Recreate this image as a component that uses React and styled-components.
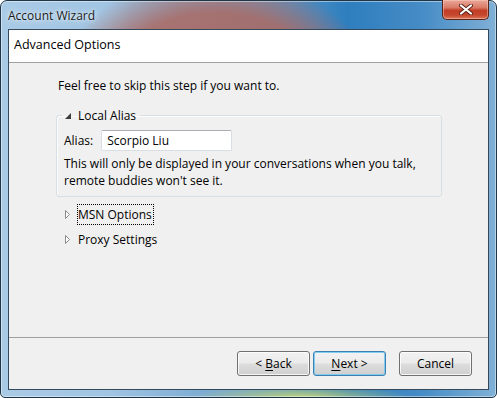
import React from "react";
import styled, { createGlobalStyle } from "styled-components";

const GlobalStyle = createGlobalStyle`
  html, body {
    margin: 0;
    padding: 0;
    background: #ffffff;
  }
  body {
    width: 497px;
    height: 398px;
    overflow: hidden;
    font-family: "Open Sans", "Noto Sans", sans-serif;
    font-size: 12px;
    color: #000;
  }
`;

const Window = styled.div`
  width: 497px;
  height: 398px;
  box-sizing: border-box;
  border: 1px solid #1f3548;
  border-radius: 7px 7px 5px 5px;
  padding: 0 7px 7px 7px;
  display: flex;
  flex-direction: column;
  box-shadow: inset 0 0 0 1px rgba(255, 255, 255, 0.45);
  background:
    radial-gradient(circle 190px at 215px 160px, rgba(168, 102, 96, 0.9) 0%, rgba(172, 104, 96, 0.85) 78%, rgba(172, 104, 96, 0) 100%),
    radial-gradient(ellipse 110px 14px at 300px 397px, rgba(196, 214, 120, 1), rgba(196, 214, 120, 0) 100%),
    linear-gradient(90deg, rgba(170, 203, 230, 1) 0%, rgba(160, 196, 226, 1) 22%, rgba(108, 160, 205, 1) 50%, rgba(46, 126, 190, 1) 70%, rgba(70, 140, 198, 1) 85%, rgba(128, 176, 214, 1) 100%);
`;

const TitleBar = styled.div`
  height: 28px;
  display: flex;
  justify-content: space-between;
  align-items: flex-start;
  flex: none;
`;

const Title = styled.span`
  margin-top: 6px;
  line-height: 17px;
  color: #1a1a1a;
  text-shadow: 0 0 6px rgba(255, 255, 255, 0.9), 0 0 3px rgba(255, 255, 255, 0.7);
`;

const CloseButton = styled.div`
  width: 47px;
  height: 20px;
  margin-top: -1px;
  box-sizing: border-box;
  border: 1px solid #5a2418;
  border-top: none;
  border-radius: 0 0 5px 5px;
  display: flex;
  align-items: center;
  justify-content: center;
  background: linear-gradient(180deg, #e9a89a 0%, #d97a66 40%, #c23e26 55%, #c5482e 80%, #dd7a5c 100%);
  box-shadow: inset 0 0 0 1px rgba(255, 210, 200, 0.45);
`;

const Client = styled.div`
  flex: 1;
  display: flex;
  flex-direction: column;
  border: 1px solid #34495c;
  background: #f0f0f0;
`;

const Header = styled.div`
  height: 33px;
  box-sizing: border-box;
  flex: none;
  padding: 6px 5px 0;
  background: #ffffff;
  border-bottom: 1px solid #a0a0a0;
  font-size: 12.5px;
  line-height: 17px;
`;

const Body = styled.div`
  flex: 1;
  padding: 14px 0 0 47px;
`;

const Intro = styled.div`
  padding-left: 2px;
  line-height: 17px;
`;

const Group = styled.fieldset`
  width: 386px;
  box-sizing: border-box;
  margin: 13px 0 0 0;
  padding: 6px 7px 7px 7px;
  border: 1px solid #d5dfe5;
  border-radius: 3px;
  box-shadow: inset 1px 1px 0 rgba(255, 255, 255, 0.8);
`;

const Legend = styled.legend`
  margin-left: -2px;
  padding: 0 4px 0 3px;
  display: flex;
  align-items: center;
  gap: 7px;
  line-height: 17px;
`;

const FieldRow = styled.div`
  display: flex;
  align-items: center;
  gap: 8px;
`;

const Input = styled.div`
  width: 131px;
  height: 21px;
  box-sizing: border-box;
  padding-left: 5px;
  line-height: 19px;
  background: #ffffff;
  border: 1px solid #d9dee4;
  border-top-color: #abadb3;
  border-radius: 2px;
`;

const Note = styled.p`
  margin: 4px 0 0 0;
  line-height: 17px;
`;

const Expander = styled.div`
  height: 25px;
  display: flex;
  align-items: center;
  padding-left: 9px;
  gap: 7px;
  margin-top: ${(p) => (p.$first ? "5px" : "0")};
`;

const ExpanderLabel = styled.span`
  padding: 1px 1px 1px 0;
  line-height: 17px;
  border: 1px dotted ${(p) => (p.$focused ? "#000" : "transparent")};
`;

const Footer = styled.div`
  height: 52px;
  box-sizing: border-box;
  flex: none;
  border-top: 1px solid #a0a0a0;
  padding: 13px 16px 0 0;
  display: flex;
  justify-content: flex-end;
  align-items: flex-start;
`;

const Button = styled.div`
  width: 73px;
  height: 25px;
  box-sizing: border-box;
  margin-left: ${(p) => p.$gap || 0}px;
  display: flex;
  align-items: center;
  justify-content: center;
  border: 1px solid ${(p) => (p.$default ? "#3c7fb1" : "#707070")};
  border-radius: 3px;
  background: linear-gradient(180deg, #f2f2f2 0%, #ebebeb 48%, #dddddd 52%, #cfcfcf 100%);
  box-shadow: inset 0 0 0 1px ${(p) => (p.$default ? "rgba(120, 200, 240, 0.9)" : "rgba(255, 255, 255, 0.8)")};
  line-height: 17px;

  u {
    text-decoration: underline;
    text-underline-offset: 2px;
  }
`;

function ExpandedArrow() {
  return (
    <svg width="6" height="6" viewBox="0 0 6 6">
      <polygon points="6,0 6,6 0,6" fill="#3c3c3c" />
    </svg>
  );
}

function CollapsedArrow() {
  return (
    <svg width="5" height="9" viewBox="0 0 5 9">
      <polygon points="0.5,0.5 4.5,4.5 0.5,8.5" fill="#ffffff" stroke="#8a8a8a" strokeWidth="1" />
    </svg>
  );
}

function CloseGlyph() {
  return (
    <svg width="14" height="11" viewBox="0 0 14 11">
      <path d="M2 1.5 L12 9.5 M12 1.5 L2 9.5" stroke="#5a2418" strokeWidth="4" strokeLinecap="round" />
      <path d="M2 1.5 L12 9.5 M12 1.5 L2 9.5" stroke="#ffffff" strokeWidth="2.2" strokeLinecap="round" />
    </svg>
  );
}

export default function App() {
  return (
    <>
      <GlobalStyle />
      <Window>
        <TitleBar>
          <Title>Account Wizard</Title>
          <CloseButton>
            <CloseGlyph />
          </CloseButton>
        </TitleBar>
        <Client>
          <Header>Advanced Options</Header>
          <Body>
            <Intro>Feel free to skip this step if you want to.</Intro>
            <Group>
              <Legend>
                <ExpandedArrow />
                Local Alias
              </Legend>
              <FieldRow>
                <span>Alias:</span>
                <Input>Scorpio Liu</Input>
              </FieldRow>
              <Note>
                This will only be displayed in your conversations when you talk,
                <br />
                remote buddies won't see it.
              </Note>
            </Group>
            <Expander $first>
              <CollapsedArrow />
              <ExpanderLabel $focused>MSN Options</ExpanderLabel>
            </Expander>
            <Expander>
              <CollapsedArrow />
              <ExpanderLabel>Proxy Settings</ExpanderLabel>
            </Expander>
          </Body>
          <Footer>
            <Button>
              &lt;&nbsp;<u>B</u>ack
            </Button>
            <Button $default $gap={3}>
              <u>N</u>ext&nbsp;&gt;
            </Button>
            <Button $gap={13}>Cancel</Button>
          </Footer>
        </Client>
      </Window>
    </>
  );
}
